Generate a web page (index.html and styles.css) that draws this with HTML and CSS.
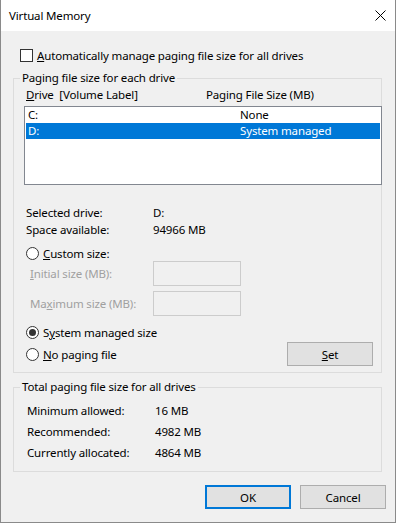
FILE: index.html
```html
<!DOCTYPE html>
<html lang="en">
<head>
	<meta charset="UTF-8">
	<title>Virtual Memory</title>
	<link rel="stylesheet" href="styles.css">
</head>
<body>
	<div class="window">
		<div class="titlebar">
			<span class="title">Virtual Memory</span>
			<svg class="close" width="11" height="11" viewBox="0 0 11 11">
				<path d="M0.5 0.5 L10.5 10.5 M10.5 0.5 L0.5 10.5" stroke="#000" stroke-width="1" fill="none"/>
			</svg>
		</div>
		<div class="content">
			<div class="check-row">
				<span class="checkbox"></span>
				<span><u>A</u>utomatically manage paging file size for all drives</span>
			</div>

			<fieldset class="group drives">
				<legend>Paging file size for each drive</legend>
				<div class="list-head">
					<span class="head-drive"><u>D</u>rive&nbsp; [Volume Label]</span>
					<span>Paging File Size (MB)</span>
				</div>
				<div class="listbox">
					<div class="list-row"><span class="col-drive">C:</span><span>None</span></div>
					<div class="list-row selected"><span class="col-drive">D:</span><span>System managed</span></div>
				</div>

				<div class="info">
					<span>Selected drive:</span><span>D:</span>
					<span>Space available:</span><span>94966 MB</span>
				</div>

				<div class="radio-row custom"><span class="radio"></span><span><u>C</u>ustom size:</span></div>
				<div class="field-row first">
					<span class="field-label"><u>I</u>nitial size (MB):</span>
					<span class="textbox"></span>
				</div>
				<div class="field-row">
					<span class="field-label">Ma<u>x</u>imum size (MB):</span>
					<span class="textbox"></span>
				</div>
				<div class="radio-row system"><span class="radio checked"></span><span>S<u>y</u>stem managed size</span></div>
				<div class="radio-row last">
					<span class="radio"></span><span><u>N</u>o paging file</span>
					<button class="btn set"><u>S</u>et</button>
				</div>
			</fieldset>

			<fieldset class="group totals">
				<legend>Total paging file size for all drives</legend>
				<div class="totals-grid">
					<span>Minimum allowed:</span><span>16 MB</span>
					<span>Recommended:</span><span>4982 MB</span>
					<span>Currently allocated:</span><span>4864 MB</span>
				</div>
			</fieldset>

			<div class="actions">
				<button class="btn default">OK</button>
				<button class="btn">Cancel</button>
			</div>
		</div>
	</div>
</body>
</html>
```

FILE: styles.css
```css
/* 기본 */
*{box-sizing: border-box;}
body{
	margin: 0; color: #000;
	font-family: "Noto Sans", "Liberation Sans", sans-serif;
	font-size: 11.5px; letter-spacing: -0.15px;
}
u{text-decoration: underline; text-underline-offset: 1px;}

.window{
	width: 396px; height: 523px;
	border: 1px solid #8a8a8a; border-top: none;
	display: flex; flex-direction: column;
	background: #f0f0f0;
}

/* 제목줄 */
.titlebar{
	height: 31px; background: #fff;
	display: flex; align-items: center; justify-content: space-between;
	padding-left: 8px; padding-right: 9px;
}
.close{display: block;}

.content{flex: 1;}

/* 체크박스 */
.check-row{
	display: flex; align-items: center; height: 13px; line-height: 13px;
	margin: 18px 0 0 19px;
}
.checkbox{
	width: 13px; height: 13px; border: 1px solid #333; background: #fff;
	margin-right: 4px;
}

/* 그룹 박스 */
.group{
	margin: 0 13px 0 12px; padding: 0;
	border: 1px solid #dcdcdc;
	min-width: 0;
}
.group legend{padding: 0 2px; margin-left: 6px; line-height: 16px;}
.drives{margin-top: 8px; padding-bottom: 6px;}

.list-head{display: flex; line-height: 16px; margin: 1px 0 0 12px;}
.head-drive{width: 180px;}

.listbox{
	height: 79px; margin: 3px -1px 0 10px;
	border: 1px solid #828790; background: #fff;
	padding: 0 1px;
}
.list-row{display: flex; height: 16px; line-height: 16px; padding-left: 2px;}
.list-row.selected{background: #0078d7; color: #fff;}
.col-drive{width: 212px;}

.info{
	display: grid; grid-template-columns: 127px auto;
	line-height: 17px; margin: 19px 0 0 12px;
}

/* 라디오 */
.radio-row{display: flex; align-items: center; height: 16px; margin-left: 12px;}
.radio{
	width: 13px; height: 13px; border: 1px solid #333; border-radius: 50%;
	background: #fff; margin-right: 4px; position: relative;
}
.radio.checked::after{
	content: ""; position: absolute; left: 2px; top: 2px;
	width: 7px; height: 7px; border-radius: 50%; background: #333;
}
.custom{margin-top: 7px;}
.system{margin-top: 8px;}
.radio-row.last{height: 24px; margin-top: 2px;}

.field-row{display: flex; align-items: center; height: 25px; margin: 5px 0 0 16px;}
.field-row.first{margin-top: 0;}
.field-label{width: 123px; color: #a0a0a0;}
.textbox{width: 88px; height: 25px; border: 1px solid #cccccc; background: #f0f0f0;}

/* 버튼 */
.btn{
	font: inherit; letter-spacing: inherit; color: #000;
	width: 86px; height: 24px; padding: 0;
	background: #e1e1e1; border: 1px solid #adadad;
}
.btn.default{border: 2px solid #0078d7;}
.set{margin-left: auto; margin-right: 8px;}

.totals{margin-top: 6px; padding-bottom: 8px;}
.totals-grid{
	display: grid; grid-template-columns: 128px auto;
	line-height: 21px; margin: 5px 0 0 13px;
}

.actions{display: flex; justify-content: flex-end; gap: 9px; margin: 13px 9px 0 0;}
```
